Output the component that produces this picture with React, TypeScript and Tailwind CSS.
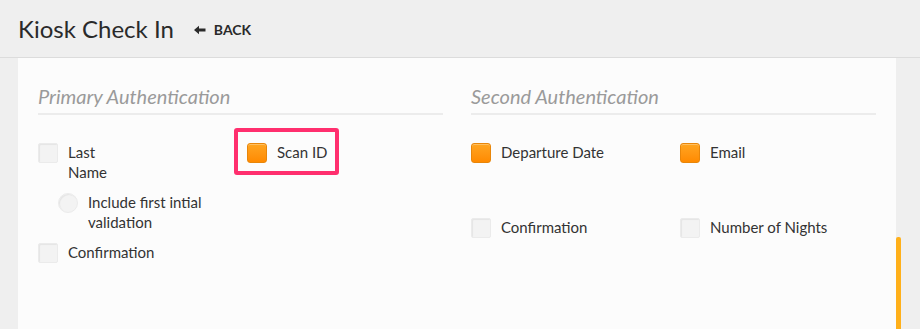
import React from "react";

function Box({ checked = false, round = false }: { checked?: boolean; round?: boolean }) {
  if (checked) {
    return (
      <span className="mt-[1px] h-[20px] w-[20px] shrink-0 rounded-[3px] border border-[#e8860a] bg-gradient-to-b from-[#ffa51f] to-[#ff8a00] shadow-[inset_0_1px_0_rgba(255,255,255,0.3)]" />
    );
  }
  return (
    <span
      className={`mt-[1px] h-[20px] w-[20px] shrink-0 border border-[#ebebeb] bg-[#f3f3f3] shadow-[inset_1px_1px_1px_rgba(0,0,0,0.06)] ${
        round ? "rounded-full" : "rounded-[2px]"
      }`}
    />
  );
}

function Option({
  label,
  checked,
  round,
  className = "",
}: {
  label: React.ReactNode;
  checked?: boolean;
  round?: boolean;
  className?: string;
}) {
  return (
    <div className={`flex items-start gap-[10px] ${className}`}>
      <Box checked={checked} round={round} />
      <span className="text-[15px] leading-[20px] text-[#333]">{label}</span>
    </div>
  );
}

export default function App() {
  return (
    <div
      className="flex h-[329px] w-[920px] flex-col overflow-hidden bg-[#efefef]"
      style={{ fontFamily: "Lato, 'Open Sans', sans-serif" }}
    >
      <header className="flex h-[58px] shrink-0 items-center gap-[20px] border-b border-[#dcdcdc] pl-[18px]">
        <h1 className="text-[24px] font-normal text-[#2a2a2a]">Kiosk Check In</h1>
        <div className="mt-[1px] flex items-center gap-[8px] text-[14px] font-bold text-[#2a2a2a]">
          <svg width="12" height="10" viewBox="0 0 12 10" className="mt-[1px]">
            <path d="M0 5 L5 0.8 L5 3.6 L11.5 3.6 L11.5 6.4 L5 6.4 L5 9.2 Z" fill="#2a2a2a" />
          </svg>
          <span>BACK</span>
        </div>
      </header>
      <div className="flex min-h-0 flex-1">
        <main className="ml-[18px] w-[878px] bg-[#fcfcfc] px-[20px] pt-[24px]">
          <div className="flex gap-[28px]">
            <section className="w-[405px]">
              <h2 className="border-b-2 border-[#ececec] pb-[3px] text-[20px] leading-[28px] italic text-[#9a9a9a]">
                Primary Authentication
              </h2>
              <div className="mt-[27px] flex">
                <div className="flex w-[196px] flex-col">
                  <Option label={<>Last<br />Name</>} />
                  <Option round className="ml-[20px] mt-[10px]" label={<>Include first intial<br />validation</>} />
                  <Option className="mt-[10px]" label="Confirmation" />
                </div>
                <div className="-mt-[14px]">
                  <div className="flex items-start gap-[10px] rounded-[3px] border-4 border-[#ff2f6e] pt-[10px] pb-[8px] pl-[9px] pr-[7px]">
                    <Box checked />
                    <span className="text-[15px] leading-[20px] text-[#333]">Scan ID</span>
                  </div>
                </div>
              </div>
            </section>
            <section className="w-[405px]">
              <h2 className="border-b-2 border-[#ececec] pb-[3px] text-[20px] leading-[28px] italic text-[#9a9a9a]">
                Second Authentication
              </h2>
              <div className="mt-[27px] grid grid-cols-[209px_1fr] gap-y-[54px]">
                <Option checked label="Departure Date" />
                <Option checked label="Email" />
                <Option label="Confirmation" />
                <Option label="Number of Nights" />
              </div>
            </section>
          </div>
        </main>
        <div className="flex w-[24px] flex-col">
          <div className="mt-[179px] h-full w-[5px] rounded-t-[2px] bg-[#ffb01a]" />
        </div>
      </div>
    </div>
  );
}
